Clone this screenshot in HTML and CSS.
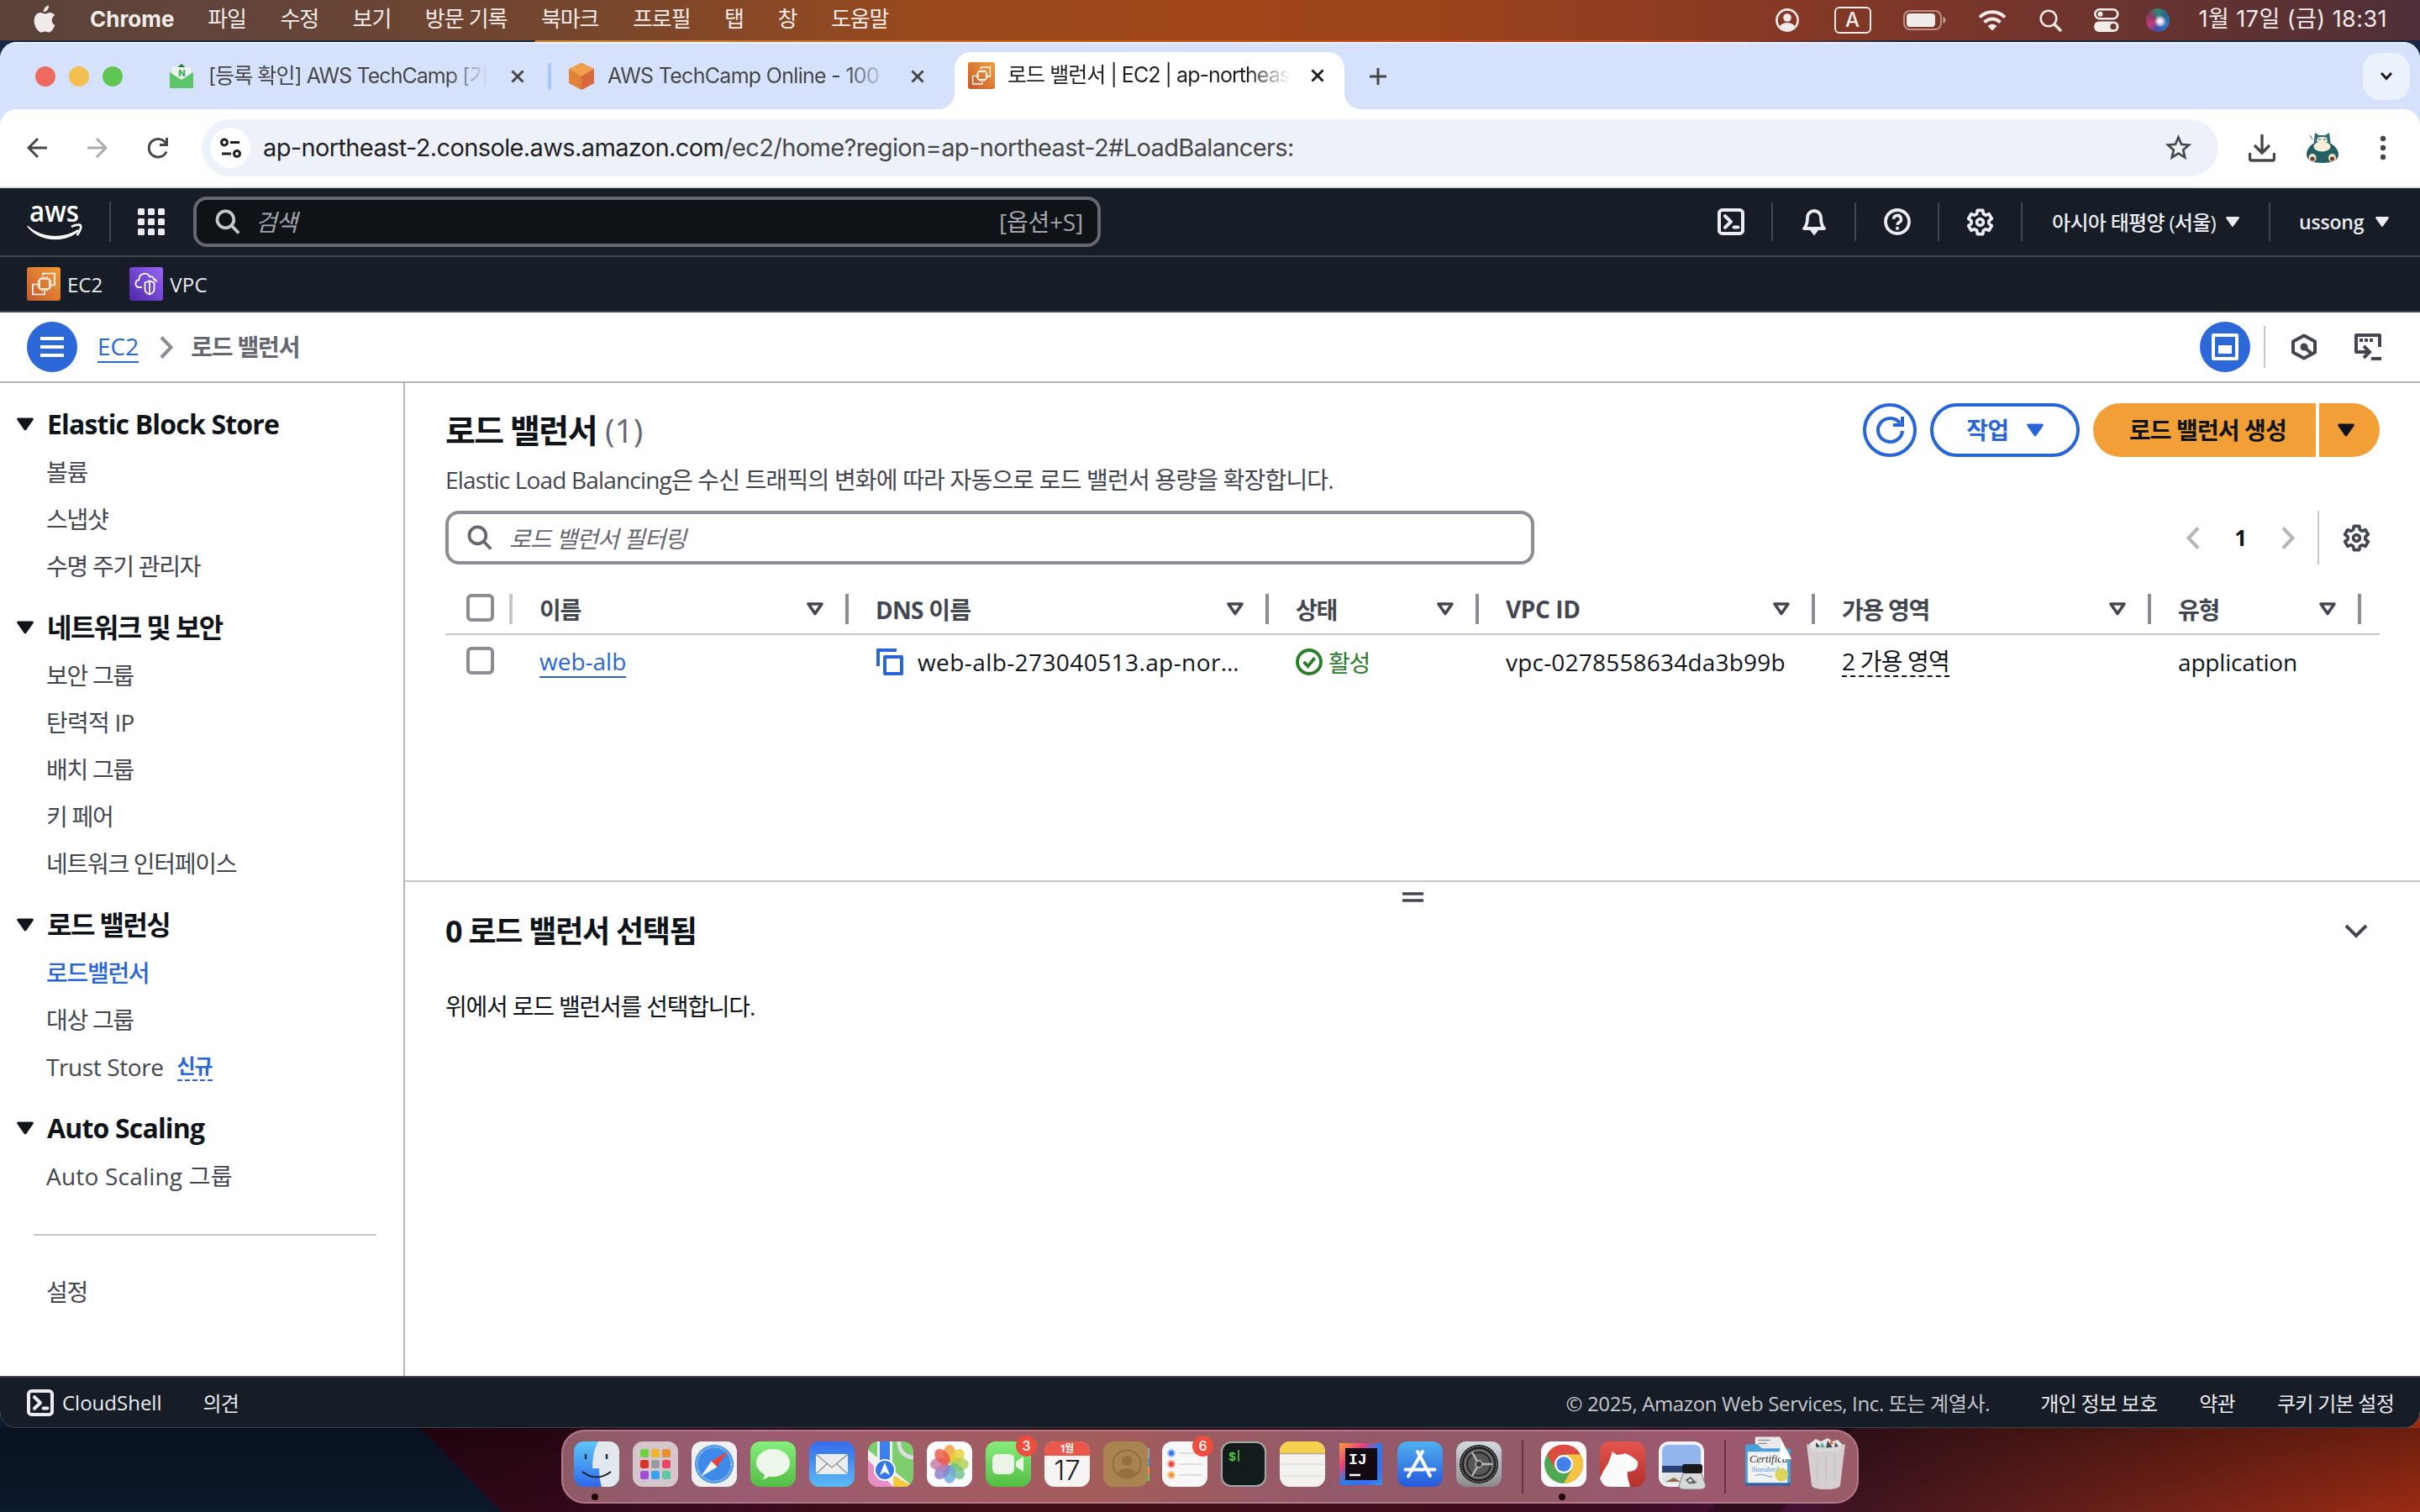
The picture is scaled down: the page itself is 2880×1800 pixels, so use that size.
FILE: index.html
```html
<!DOCTYPE html>
<html lang="ko">
<head>
<meta charset="utf-8">
<title>로드 밸런서 | EC2 | ap-northeast-2</title>
<link rel="stylesheet" href="styles.css">
</head>
<body>
<svg class="sprite" width="0" height="0">
  <defs>
    <linearGradient id="gOrange" x1="0" y1="1" x2="1" y2="0"><stop offset="0" stop-color="#c8592d"/><stop offset="1" stop-color="#f19d39"/></linearGradient>
    <linearGradient id="gPurple" x1="0" y1="1" x2="1" y2="0"><stop offset="0" stop-color="#4d27aa"/><stop offset="1" stop-color="#9a66f5"/></linearGradient>
    <symbol id="search" viewBox="0 0 16 16"><circle cx="6.6" cy="6.6" r="5.3" fill="none" stroke="currentColor" stroke-width="2"/><path d="M10.4 10.4l4.6 4.8" fill="none" stroke="currentColor" stroke-width="2"/></symbol>
    <symbol id="caret" viewBox="0 0 16 12"><path d="M1.4 0h13.2c1.1 0 1.7 1.200 1 2L9 11.300c-.5.800-1.500.800-2 0L.4 2C-.3 1.200.3 0 1.400 0z" fill="currentColor"/></symbol>
    <symbol id="filter" viewBox="0 0 20 16"><path d="M2 2h16l-8 11.500z" fill="none" stroke="currentColor" stroke-width="3.600" stroke-linejoin="round"/></symbol>
    <symbol id="gear" viewBox="0 0 16 16"><path d="M6.090 3.270L6.430 1.180H9.570L9.910 3.270L11.140 3.980L13.120 3.230L14.690 5.950L13.050 7.290V8.710L14.690 10.050L13.120 12.770L11.140 12.020L9.910 12.730L9.570 14.820H6.430L6.090 12.730L4.860 12.020L2.880 12.770L1.310 10.050L2.950 8.710V7.290L1.310 5.950L2.880 3.230L4.860 3.980z" fill="none" stroke="currentColor" stroke-width="1.800" stroke-linejoin="round"/><circle cx="8" cy="8" r="1.900" fill="none" stroke="currentColor" stroke-width="1.800"/></symbol>
    <symbol id="shell" viewBox="0 0 16 16"><rect x="1" y="1" width="14" height="14" rx="1.800" fill="none" stroke="currentColor" stroke-width="2"/><path d="M4.500 4.600L8 8l-3.500 3.400" fill="none" stroke="currentColor" stroke-width="2" stroke-linecap="round" stroke-linejoin="round"/><path d="M9.800 11.200h2.400" stroke="currentColor" stroke-width="2" stroke-linecap="round"/></symbol>
    <symbol id="ec2" viewBox="0 0 40 40"><rect width="40" height="40" rx="3" fill="url(#gOrange)"/><g fill="none" stroke="#fff" stroke-width="1.700"><path d="M19 10V7.500h14v14h-4M15 20.500H7v12h14V29"/><rect x="15" y="14" width="12" height="12" rx="1"/><path d="M18 14v-2.500M21 14v-2.500M24 14v-2.500M18 28.500V26M21 28.500V26M24 28.500V26M12.500 17H15M12.500 20H15M12.500 23H15M27 17h2.500M27 20h2.500M27 23h2.500"/></g></symbol>
    <symbol id="close" viewBox="0 0 16 16"><path d="M1.500 1.500l13 13M14.500 1.500l-13 13" stroke="currentColor" stroke-width="3" fill="none"/></symbol>
  </defs>
</svg>

<svg class="wallpaper" viewBox="0 0 2880 1800" width="2880" height="1800">
  <defs>
    <linearGradient id="wp1" x1="500" x2="2880" y1="0" y2="0" gradientUnits="userSpaceOnUse">
      <stop offset="0" stop-color="#2c0614"/><stop offset=".17" stop-color="#3d0a22"/><stop offset=".2" stop-color="#3b0d17"/><stop offset=".36" stop-color="#430f16"/><stop offset=".6" stop-color="#3d0b22"/><stop offset=".68" stop-color="#47103a"/><stop offset=".72" stop-color="#41151f"/><stop offset=".85" stop-color="#6a2018"/><stop offset="1" stop-color="#9a2b14"/>
    </linearGradient>
    <linearGradient id="wp2" x1="0" x2="0" y1="1700" y2="1800" gradientUnits="userSpaceOnUse"><stop offset="0" stop-color="#000" stop-opacity=".3"/><stop offset="1" stop-color="#000" stop-opacity="0"/></linearGradient>
    <linearGradient id="wp3" x1="635" x2="2250" y1="0" y2="0" gradientUnits="userSpaceOnUse"><stop offset="0" stop-color="#c98a33"/><stop offset=".35" stop-color="#c9601f"/><stop offset=".85" stop-color="#b8401a"/><stop offset="1" stop-color="#1a2a48"/></linearGradient>
  </defs>
  <rect width="2880" height="1800" fill="#152744"/>
  <path d="M631 60l8-16h1611v16z" fill="url(#wp3)"/>
  <rect y="1600" width="2880" height="200" fill="#0c182b"/>
  <path d="M423 1600L500 1700L597 1800H2880V1600z" fill="url(#wp1)"/>
  <path d="M2104 1700H2206L2119 1800H2034z" fill="#2e0d1d"/>
  <rect y="1700" width="2880" height="100" fill="url(#wp2)"/>
</svg>

<header class="menubar">
  <svg class="apple" viewBox="0 0 26 32"><path fill="#f1ecea" d="M18 0c.2 2.300-.7 4.200-1.900 5.600-1.200 1.400-2.700 2.200-4.300 2.100-.2-2 .7-4 1.900-5.300C14.900 1 16.600.2 18 0zM25.400 23.600c-1.500 4.100-4.200 8.300-7 8.400-1.800 0-2.500-1.100-4.700-1.100-2.200 0-2.900 1.100-4.700 1.100C5.700 32.100.6 25.300.6 18.300c0-6.100 3.700-9.800 7.600-9.800 2.200 0 3.900 1.500 5.500 1.500 1.500 0 3.500-1.600 6.200-1.500 1.300 0 3.700.6 5.200 3.200-4.900 2.900-4.200 9.600.3 11.900z"/></svg>
  <nav class="menus">
    <b class="t">Chrome</b><span class="t">파일</span><span class="t">수정</span><span class="t">보기</span><span class="t">방문 기록</span><span class="t">북마크</span><span class="t">프로필</span><span class="t">탭</span><span class="t">창</span><span class="t">도움말</span>
  </nav>
  <div class="tray">
    <svg width="28" height="28" viewBox="0 0 28 28"><circle cx="14" cy="14" r="12.600" fill="none" stroke="#f1ecea" stroke-width="2.600"/><circle cx="14" cy="11" r="4.800" fill="#f1ecea"/><path d="M5 21.500c3-6 15-6 18 0-4 5.500-14 5.500-18 0z" fill="#f1ecea"/></svg>
    <span class="ime">A</span>
    <svg width="52" height="24" viewBox="0 0 52 24"><rect x="1" y="1" width="44" height="22" rx="7" fill="none" stroke="#f1ecea" stroke-opacity=".5" stroke-width="2"/><rect x="4" y="4" width="34" height="16" rx="4" fill="#f1ecea"/><path d="M47.500 8c4 1.500 4 6.500 0 8z" fill="#f1ecea" fill-opacity=".6"/></svg>
    <svg width="34" height="26" viewBox="0 0 34 26"><path d="M2 9.500C10 1 24 1 32 9.500M7.500 15.500c5.500-5.500 13.500-5.500 19 0" fill="none" stroke="#f1ecea" stroke-width="4"/><path d="M11.500 20q5.500-4.500 11 0L17 25.500z" fill="#f1ecea"/></svg>
    <svg width="27" height="27" viewBox="0 0 27 27"><circle cx="11" cy="11" r="9.300" fill="none" stroke="#f1ecea" stroke-width="2.600"/><path d="M18 18l7 7" stroke="#f1ecea" stroke-width="3.400" stroke-linecap="round"/></svg>
    <svg width="30" height="28" viewBox="0 0 30 28"><rect x="1.300" y="1.300" width="27" height="11" rx="5.500" fill="none" stroke="#f1ecea" stroke-width="2.600"/><circle cx="7.500" cy="6.800" r="3" fill="#f1ecea"/><rect x="0" y="15.500" width="29.500" height="12.500" rx="6.200" fill="#f1ecea"/><circle cx="23" cy="21.700" r="3.600" fill="#6a3430"/></svg>
    <i class="siri"></i>
    <span class="t clock">1월 17일 (금) 18:31</span>
  </div>
</header>

<main class="window">
  <div class="tabstrip">
    <div class="lights"><i></i><i></i><i></i></div>
    <div class="tab tab-mail">
      <svg width="28" height="30" viewBox="0 0 28 30"><path d="M7 6l7-6 7 6z" fill="#2f7d43"/><path d="M0 10l14 8 14-8v18q0 1-1 1H1q-1 0-1-1z" fill="#5cc46a"/><path d="M3 4h22v8L14 19 3 12z" fill="#f1f3f1"/><text x="14" y="14.500" text-anchor="middle" font-family="Inter" font-weight="800" font-size="11" fill="#3dae53">N</text></svg>
      <span class="fade"><span class="t">[등록 확인] AWS TechCamp [기</span></span>
      <svg class="x" width="16" height="16"><use href="#close"/></svg>
    </div>
    <i class="tabsep"></i>
    <div class="tab tab-camp">
      <svg width="32" height="32" viewBox="0 0 32 32"><path d="M16 0l15 7v17l-15 8L1 24V7z" fill="#e2813a"/><path d="M16 0l15 7-15 9L1 7z" fill="#f0a04a"/><path d="M16 16l15-9v17l-15 8z" fill="#d9693a"/></svg>
      <span class="fade"><span class="t">AWS TechCamp Online - 100</span></span>
      <svg class="x" width="16" height="16"><use href="#close"/></svg>
    </div>
    <div class="tab tab-active">
      <svg width="32" height="32"><use href="#ec2"/></svg>
      <span class="fade"><span class="t">로드 밸런서 | EC2 | ap-northeas</span></span>
      <svg class="x" width="16" height="16"><use href="#close"/></svg>
    </div>
    <svg class="plus" width="22" height="22" viewBox="0 0 22 22"><path d="M11 1v20M1 11h20" stroke="#474747" stroke-width="3"/></svg>
    <div class="tabmenu"><svg width="16" height="12" viewBox="0 0 16 12"><path d="M2 2l6 6.500L14 2" fill="none" stroke="#1f1f1f" stroke-width="3"/></svg></div>
  </div>

  <div class="toolbar">
    <svg class="back" width="25" height="26" viewBox="0 0 25 26"><path d="M24 13H3M13 2L2 13l11 11" fill="none" stroke="#474747" stroke-width="3"/></svg>
    <svg class="fwd" width="25" height="26" viewBox="0 0 25 26"><path d="M1 13h21M12 2l11 11-11 11" fill="none" stroke="#ababab" stroke-width="3"/></svg>
    <svg class="reload" width="26" height="26" viewBox="0 0 26 26"><path d="M23 17.500A10.800 10.800 0 1 1 22.500 8" fill="none" stroke="#474747" stroke-width="3"/><path d="M25 1v10H15v-3h7V1z" fill="#474747"/></svg>
    <div class="omnibox">
      <i class="tune"><svg width="25" height="26" viewBox="0 0 25 26"><g fill="none" stroke="#1f1f1f" stroke-width="3"><circle cx="5" cy="6.500" r="3.500"/><path d="M12 6.500h11M2 20h11"/><circle cx="20" cy="20" r="3.500"/></g></svg></i>
      <span class="t url">ap-northeast-2.console.aws.amazon.com<em>/ec2/home?region=ap-northeast-2#LoadBalancers:</em></span>
      <svg width="31" height="30" viewBox="0 0 31 30"><path d="M15.500 3.500l3.500 8.300 9 .8-6.800 6 2 8.800-7.700-4.700-7.700 4.700 2-8.800-6.800-6 9-.8z" fill="none" stroke="#474747" stroke-width="2.700"/></svg>
    </div>
    <svg class="dl" width="32" height="33" viewBox="0 0 32 33"><path d="M16 0v21M7 13l9 9 9-9M1.500 22v7q0 2 2 2h25q2 0 2-2v-7" fill="none" stroke="#474747" stroke-width="3.400"/></svg>
    <svg class="avatar" width="40" height="36" viewBox="0 0 40 36"><path d="M11 0l5 3h7l5-3 1.500 12H9.500z" fill="#2a6c78"/><path d="M13 11h13c8 3 13 9 13 15 0 7-8 10-19.500 10S1 33 1 26c0-6 4-12 12-15z" fill="#245f66"/><path d="M14 6q6-2 11 0l1 5H13z" fill="#f5eed9"/><path d="M15 8h3M21 8h3" stroke="#2b4b52" stroke-width="1.200"/><ellipse cx="19.500" cy="16.500" rx="10" ry="6" fill="#f7f0d8"/><ellipse cx="8" cy="30" rx="4.500" ry="5" fill="#f3e6c8"/><ellipse cx="31.500" cy="30" rx="4.500" ry="5" fill="#f3e6c8"/><circle cx="8" cy="31" r="2.600" fill="#6d3d35"/><circle cx="31.500" cy="31" r="2.600" fill="#6d3d35"/><path d="M5 3l3 5" stroke="#777" stroke-width="1.200"/></svg>
    <svg class="dots" width="8" height="30" viewBox="0 0 8 30"><g fill="#474747"><circle cx="4" cy="4" r="3.200"/><circle cx="4" cy="15" r="3.200"/><circle cx="4" cy="26" r="3.200"/></g></svg>
  </div>

  <div class="awsbar">
    <svg class="logo" width="66" height="44" viewBox="0 0 66 44"><text x="3" y="22" textLength="59" lengthAdjust="spacingAndGlyphs" font-family="Open Sans" font-weight="600" font-size="34" fill="#fff">aws</text><path d="M1 27C17 42 43 43 60 32c1-.7 2 .5 1 1.300C44 48 14 45 1 28z" fill="#fff" stroke="#fff"/><path d="M53 28c4-2.500 10-3 11-1.500s-1 8-4.500 11.500" fill="none" stroke="#fff" stroke-width="2.600"/></svg>
    <i class="sep"></i>
    <svg class="apps" width="32" height="32" viewBox="0 0 32 32"><g fill="#ebebf0"><rect width="8" height="8" rx="1.500"/><rect x="12" width="8" height="8" rx="1.500"/><rect x="24" width="8" height="8" rx="1.500"/><rect y="12" width="8" height="8" rx="1.500"/><rect x="12" y="12" width="8" height="8" rx="1.500"/><rect x="24" y="12" width="8" height="8" rx="1.500"/><rect y="24" width="8" height="8" rx="1.500"/><rect x="12" y="24" width="8" height="8" rx="1.500"/><rect x="24" y="24" width="8" height="8" rx="1.500"/></g></svg>
    <div class="gsearch"><svg width="30" height="30"><use href="#search"/></svg><span class="t ph">검색</span><span class="t key">[옵션+S]</span></div>
    <div class="tools">
      <div><svg width="32" height="32"><use href="#shell"/></svg></div>
      <div><svg width="32" height="34" viewBox="0 0 16 17"><path d="M2 12.500c1.500-1.500 2-3 2-6.500a4 4 0 0 1 8 0c0 3.500.5 5 2 6.500z" fill="none" stroke="currentColor" stroke-width="1.900" stroke-linejoin="round"/><path d="M5.500 13.500h5L8 16.800z" fill="currentColor"/></svg></div>
      <div><svg width="32" height="32" viewBox="0 0 16 16"><circle cx="8" cy="8" r="7" fill="none" stroke="currentColor" stroke-width="1.900"/><path d="M5.800 6.400a2.200 2.200 0 1 1 3.300 1.900c-.8.500-1.100.8-1.100 1.600" fill="none" stroke="currentColor" stroke-width="1.800"/><rect x="7.100" y="11" width="1.800" height="1.800" fill="currentColor"/></svg></div>
      <div><svg width="33" height="33"><use href="#gear"/></svg></div>
      <div class="region"><span class="t">아시아 태평양 (서울)</span><svg width="16" height="12"><use href="#caret"/></svg></div>
      <div class="user"><span class="t">ussong</span><svg width="16" height="12"><use href="#caret"/></svg></div>
    </div>
  </div>

  <div class="favs">
    <svg width="40" height="40"><use href="#ec2"/></svg><span class="t f1">EC2</span>
    <svg width="40" height="40" viewBox="0 0 40 40"><rect width="40" height="40" rx="3" fill="url(#gPurple)"/><g fill="none" stroke="#fff" stroke-width="1.800"><path d="M15 24h-3c-6 0-6-8-.5-9C11 7 22 5 24 11.500c3-1 5 .5 5 3 2 .2 3 1 3.500 3"/><path d="M18.500 18.500l5.500-2 5.500 2v8q0 4-5.500 6-5.500-2-5.500-6zM24 17v15"/></g></svg><span class="t">VPC</span>
  </div>

  <div class="crumbs">
    <i class="round"><svg width="28" height="24" viewBox="0 0 28 24"><path d="M0 2h28M0 12h28M0 22h28" stroke="#fff" stroke-width="4"/></svg></i>
    <a class="t link">EC2</a>
    <svg class="chev" width="17" height="27" viewBox="0 0 17 27"><path d="M2 1.500L13.500 13.500 2 25.500" fill="none" stroke="#8c8c94" stroke-width="4"/></svg>
    <b class="t here">로드 밸런서</b>
    <div class="views">
      <i class="round"><svg width="32" height="32" viewBox="0 0 16 16"><rect x="1" y="1" width="14" height="14" fill="none" stroke="#fff" stroke-width="2" stroke-linejoin="round"/><rect x="4" y="7" width="8" height="5" fill="#fff"/></svg></i>
      <i class="vsep"></i>
      <svg width="32" height="32" viewBox="0 0 32 32"><path d="M16 2.500l13 7v13l-13 7-13-7v-13z" fill="none" stroke="#424650" stroke-width="4" stroke-linejoin="round"/><circle cx="16" cy="16" r="4.500" fill="#424650"/><path d="M17 17l8 7" stroke="#424650" stroke-width="4"/></svg>
      <svg width="32" height="32" viewBox="0 0 32 32"><path d="M30 16V2H2v20h14" fill="none" stroke="#424650" stroke-width="4" stroke-linejoin="round"/><path d="M6 8h4M12 8h4M18 8h4" stroke="#424650" stroke-width="4"/><path d="M11 15l7 7-7 7" fill="none" stroke="#424650" stroke-width="4"/><path d="M20 30h12" stroke="#424650" stroke-width="4"/></svg>
    </div>
  </div>

  <div class="body">
    <aside class="side">
      <h3 class="latin"><svg width="20" height="16"><use href="#caret"/></svg><span class="t">Elastic Block Store</span></h3>
      <ul><li><span class="t">볼륨</span></li><li><span class="t">스냅샷</span></li><li><span class="t">수명 주기 관리자</span></li></ul>
      <h3><svg width="20" height="16"><use href="#caret"/></svg><span class="t">네트워크 및 보안</span></h3>
      <ul><li><span class="t">보안 그룹</span></li><li><span class="t mixed">탄력적 IP</span></li><li><span class="t">배치 그룹</span></li><li><span class="t">키 페어</span></li><li><span class="t">네트워크 인터페이스</span></li></ul>
      <h3><svg width="20" height="16"><use href="#caret"/></svg><span class="t">로드 밸런싱</span></h3>
      <ul><li class="on"><span class="t">로드밸런서</span></li><li><span class="t">대상 그룹</span></li><li><span class="t tight">Trust Store</span><b class="t new">신규</b></li></ul>
      <h3 class="latin"><svg width="20" height="16"><use href="#caret"/></svg><span class="t">Auto Scaling</span></h3>
      <ul><li><span class="t wide">Auto Scaling 그룹</span></li></ul>
      <hr>
      <ul><li><span class="t">설정</span></li></ul>
    </aside>

    <section class="main">
      <div class="list">
        <div class="titlebar">
          <h1><span class="t">로드 밸런서</span><span class="t count">(1)</span></h1>
          <div class="btns">
            <button class="btn refresh"><svg width="33" height="32" viewBox="0 0 33 32"><path d="M31 17A14.500 14 0 1 1 28 7.500" fill="none" stroke="currentColor" stroke-width="4"/><path d="M31 0v10H20" fill="none" stroke="currentColor" stroke-width="4"/></svg></button>
            <button class="btn"><span class="t">작업</span><svg width="20" height="16"><use href="#caret"/></svg></button>
            <button class="btn primary first"><span class="t">로드 밸런서 생성</span></button><button class="btn primary last"><svg width="20" height="16"><use href="#caret"/></svg></button>
          </div>
        </div>
        <p class="desc"><span class="t">Elastic Load Balancing은 수신 트래픽의 변화에 따라 자동으로 로드 밸런서 용량을 확장합니다.</span></p>
        <div class="filterrow">
          <div class="filter"><svg width="30" height="30"><use href="#search"/></svg><span class="t">로드 밸런서 필터링</span></div>
          <div class="pager">
            <svg width="17" height="27" viewBox="0 0 17 27"><path d="M15 1.500L3.500 13.500 15 25.500" fill="none" stroke="#b4b4bb" stroke-width="4"/></svg>
            <b>1</b>
            <svg width="17" height="27" viewBox="0 0 17 27"><path d="M2 1.500L13.500 13.500 2 25.500" fill="none" stroke="#b4b4bb" stroke-width="4"/></svg>
            <i></i>
            <svg class="pref" width="33" height="33"><use href="#gear"/></svg>
          </div>
        </div>
        <div class="row head">
          <div class="ck"><i class="box"></i></div>
          <div><span class="t">이름</span><svg width="20" height="16"><use href="#filter"/></svg></div>
          <div><span class="t mixed">DNS 이름</span><svg width="20" height="16"><use href="#filter"/></svg></div>
          <div><span class="t">상태</span><svg width="20" height="16"><use href="#filter"/></svg></div>
          <div><span class="t tight">VPC ID</span><svg width="20" height="16"><use href="#filter"/></svg></div>
          <div><span class="t">가용 영역</span><svg width="20" height="16"><use href="#filter"/></svg></div>
          <div><span class="t">유형</span><svg width="20" height="16"><use href="#filter"/></svg></div>
        </div>
        <div class="row data">
          <div class="ck"><i class="box"></i></div>
          <div><a class="t link">web-alb</a></div>
          <div><svg class="copy" width="34" height="34" viewBox="0 0 34 34"><path d="M3 22V3h22" fill="none" stroke="#2866d8" stroke-width="4"/><rect x="11" y="11" width="20" height="20" fill="none" stroke="#2866d8" stroke-width="4" stroke-linejoin="round"/></svg><span class="t dns">web-alb-273040513.ap-nor…</span></div>
          <div class="ok"><svg width="32" height="32" viewBox="0 0 16 16"><circle cx="8" cy="8" r="7" fill="none" stroke="currentColor" stroke-width="1.900"/><path d="M4.800 8l2.500 2.600 4-5" fill="none" stroke="currentColor" stroke-width="1.900"/></svg><span class="t">활성</span></div>
          <div><span class="t wide">vpc-0278558634da3b99b</span></div>
          <div><span class="t dash">2 가용 영역</span></div>
          <div><span class="t app-type">application</span></div>
        </div>
      </div>
      <div class="panel">
        <svg class="grip" width="25" height="12" viewBox="0 0 25 12"><path d="M0 2h25M0 10h25" stroke="#424650" stroke-width="3.600"/></svg>
        <h2><span class="t">0 로드 밸런서 선택됨</span><svg width="28" height="18" viewBox="0 0 28 18"><path d="M2 2l12 12L26 2" fill="none" stroke="#424650" stroke-width="4"/></svg></h2>
        <p><span class="t">위에서 로드 밸런서를 선택합니다.</span></p>
      </div>
    </section>
  </div>

  <footer class="foot">
    <svg width="32" height="32"><use href="#shell"/></svg><span class="t cs">CloudShell</span><span class="t fb">의견</span>
    <span class="t copyr">© 2025, Amazon Web Services, Inc. 또는 계열사.</span><span class="t">개인 정보 보호</span><span class="t">약관</span><span class="t">쿠키 기본 설정</span>
  </footer>
</main>

<div class="dockarea">
  <div class="dock">
    <div class="app running"><svg viewBox="0 0 54 54"><defs><linearGradient id="fa" x2="0" y2="1"><stop stop-color="#5ec6f8"/><stop offset="1" stop-color="#2f69ea"/></linearGradient></defs><rect width="54" height="54" rx="12" fill="url(#fa)"/><path d="M29 0h13a12 12 0 0 1 12 12v30a12 12 0 0 1-12 12H33q-3-10-3-22h-8Q22 12 29 0z" fill="#e3e7ee"/><path d="M14 15v6M39 15v6" stroke="#1d3150" stroke-width="2.500"/><path d="M10 36q17 13 34 0" fill="none" stroke="#14202e" stroke-width="2"/></svg></div>
    <div class="app"><svg viewBox="0 0 54 54"><rect width="54" height="54" rx="12" fill="#d5c5cd"/><g><rect x="9" y="9" width="10" height="10" rx="2.500" fill="#6fd13f"/><rect x="22" y="9" width="10" height="10" rx="2.500" fill="#f0b52f"/><rect x="35" y="9" width="10" height="10" rx="2.500" fill="#e8902f"/><rect x="9" y="22" width="10" height="10" rx="2.500" fill="#d83328"/><rect x="22" y="22" width="10" height="10" rx="2.500" fill="#9b9ca3"/><rect x="35" y="22" width="10" height="10" rx="2.500" fill="#ea4763"/><rect x="9" y="35" width="10" height="10" rx="2.500" fill="#a24bdc"/><rect x="22" y="35" width="10" height="10" rx="2.500" fill="#34a4f0"/><rect x="35" y="35" width="10" height="10" rx="2.500" fill="#62c7a4"/></g></svg></div>
    <div class="app"><svg viewBox="0 0 54 54"><rect width="54" height="54" rx="12" fill="#f0f0f1"/><circle cx="27" cy="27" r="23" fill="#3d8ae8"/><circle cx="27" cy="27" r="20.500" fill="none" stroke="#d4e6fb" stroke-width="2.500" stroke-dasharray=".8 1.600"/><path d="M43 12L30.500 30.500 23.500 23.500z" fill="#e8433a"/><path d="M11 42l12.500-18.500 7 7z" fill="#f2f3f5"/></svg></div>
    <div class="app"><svg viewBox="0 0 54 54"><defs><linearGradient id="fb" x2="0" y2="1"><stop stop-color="#86ee7c"/><stop offset="1" stop-color="#53bd45"/></linearGradient></defs><rect width="54" height="54" rx="12" fill="url(#fb)"/><path d="M27 9c11 0 20 7 20 16.500S38 42 27 42c-2 0-3 0-5-.5-2 2-4 3-7.500 3.500 2-2 2.500-4 2-6C11 36 7 31 7 25.500 7 16 16 9 27 9z" fill="#ecf6e9"/></svg></div>
    <div class="app"><svg viewBox="0 0 54 54"><defs><linearGradient id="fc" x2="0" y2="1"><stop stop-color="#356bea"/><stop offset="1" stop-color="#5abcf5"/></linearGradient></defs><rect width="54" height="54" rx="12" fill="url(#fc)"/><rect x="8" y="15" width="38" height="24" rx="3" fill="#ededee"/><path d="M9 16l18 15 18-15M9 38l13-12M45 38L32 26" fill="none" stroke="#8e9197" stroke-width="1.300"/></svg></div>
    <div class="app"><svg viewBox="0 0 54 54"><defs><clipPath id="cm"><rect width="54" height="54" rx="12"/></clipPath></defs><g clip-path="url(#cm)"><rect width="54" height="54" fill="#7ccf6c"/><path d="M0 18l30 36H0z" fill="#e68fc6"/><path d="M0 10l54 44H30L0 22z" fill="#f0f0ee"/><path d="M30 54V40l24 14z" fill="#f4c93f"/><rect x="14" width="12" height="30" fill="#3a80ee"/><path d="M11 0h3v26h-3zM26 0h3v26h-3z" fill="#eef1f0"/><circle cx="54" cy="2" r="17" fill="none" stroke="#d9dde0" stroke-width="5"/></g><circle cx="20" cy="34" r="13" fill="#fff"/><circle cx="20" cy="34" r="11" fill="#3577ea"/><path d="M20 25l6 15-6-3.500-6 3.500z" fill="#fff"/></svg></div>
    <div class="app"><svg viewBox="0 0 54 54"><rect width="54" height="54" rx="12" fill="#fbfbfb"/><g fill-opacity=".82"><ellipse cx="27" cy="15" rx="7.500" ry="11" fill="#f29b37"/><ellipse cx="27" cy="15" rx="7.500" ry="11" fill="#e9cf3a" transform="rotate(45 27 27)"/><ellipse cx="27" cy="15" rx="7.500" ry="11" fill="#b3cf50" transform="rotate(90 27 27)"/><ellipse cx="27" cy="15" rx="7.500" ry="11" fill="#6fbf84" transform="rotate(135 27 27)"/><ellipse cx="27" cy="15" rx="7.500" ry="11" fill="#6aa8dd" transform="rotate(180 27 27)"/><ellipse cx="27" cy="15" rx="7.500" ry="11" fill="#8a7fc9" transform="rotate(225 27 27)"/><ellipse cx="27" cy="15" rx="7.500" ry="11" fill="#c67aa9" transform="rotate(270 27 27)"/><ellipse cx="27" cy="15" rx="7.500" ry="11" fill="#ea5a48" transform="rotate(315 27 27)"/></g></svg></div>
    <div class="app"><svg viewBox="0 0 54 54"><rect width="54" height="54" rx="12" fill="url(#fb)"/><rect x="8" y="15" width="26" height="24" rx="6" fill="#eaf5e7"/><path d="M36 24l9-6v18l-9-6z" fill="#eaf5e7"/></svg><b class="badge">3</b></div>
    <div class="app"><svg viewBox="0 0 54 54"><defs><clipPath id="cc"><rect width="54" height="54" rx="12"/></clipPath></defs><rect width="54" height="54" rx="12" fill="#f7f5f3"/><rect width="54" height="17" fill="#e8594c" clip-path="url(#cc)"/></svg><span class="mon">1월</span><span class="day">17</span></div>
    <div class="app"><svg viewBox="0 0 54 54"><path d="M50 8h5v12h-5z" fill="#8fa6b0"/><path d="M50 20h5v10h-5z" fill="#4b92d8"/><path d="M50 30h5v9h-5z" fill="#ee9338"/><path d="M50 39h5v8h-5z" fill="#6abf4e"/><rect width="53" height="54" rx="12" fill="#a98350"/><circle cx="28" cy="27" r="16.500" fill="none" stroke="#8b6939" stroke-width="1.500"/><circle cx="28" cy="23" r="6" fill="#92703f"/><path d="M17 38c3-8 19-8 22 0-6 6-16 6-22 0z" fill="#92703f"/></svg></div>
    <div class="app"><svg viewBox="0 0 54 54"><rect width="54" height="54" rx="12" fill="#f8f7f7"/><g stroke="#c5c3c3" stroke-width="1.200"><path d="M20 14h28M20 27h28M20 40h28"/></g><g stroke-width="2" fill="none"><circle cx="11" cy="14" r="4" fill="#3478f6" stroke="#a9c5f6"/><circle cx="11" cy="27" r="4" fill="#e84b3d" stroke="#f3b2ac"/><circle cx="11" cy="40" r="4" fill="#f29a37" stroke="#f7d2a5"/></g></svg><b class="badge">6</b></div>
    <div class="app"><svg viewBox="0 0 54 54"><rect x="1" y="1" width="52" height="52" rx="11" fill="#141b1d" stroke="#a3a8aa" stroke-width="2"/><text x="9" y="23" font-family="Liberation Mono" font-weight="700" font-size="15" fill="#57d13c">$</text><path d="M21 10v14" stroke="#57d13c" stroke-width="1.500"/></svg></div>
    <div class="app"><svg viewBox="0 0 54 54"><rect width="54" height="54" rx="12" fill="#f3f2ef"/><path d="M0 15v-3A12 12 0 0 1 12 0h30a12 12 0 0 1 12 12v3z" fill="#f7d04d"/><path d="M0 14.500h54" stroke="#b4a98a" stroke-width="1.500"/><path d="M0 27h54M0 41h54" stroke="#d6d5d1" stroke-width="1.200"/></svg></div>
    <div class="app"><svg viewBox="0 0 54 54"><defs><linearGradient id="fj" x1="0" y1="0" x2="1" y2="1"><stop stop-color="#f6a13c"/><stop offset=".3" stop-color="#e8407c"/><stop offset=".5" stop-color="#2a7de6"/><stop offset=".8" stop-color="#3c6cf0"/><stop offset="1" stop-color="#2a9ae8"/></linearGradient></defs><rect x="1" y="2" width="51" height="50" fill="url(#fj)"/><rect x="8" y="8" width="38" height="38" fill="#140a14"/><text x="12" y="27" font-family="Liberation Mono" font-weight="700" font-size="18" fill="#fff">IJ</text><path d="M13 40h13" stroke="#fff" stroke-width="2.500"/></svg></div>
    <div class="app"><svg viewBox="0 0 54 54"><defs><linearGradient id="fs" x2="0" y2="1"><stop stop-color="#4fb0f0"/><stop offset="1" stop-color="#2559da"/></linearGradient></defs><rect width="54" height="54" rx="12" fill="url(#fs)"/><path d="M24 12l15 29M30 12L16 36M9.500 33.500h22M37 33.500h7.500M14.500 39l-1.500 2.500" stroke="#fff" stroke-width="4" stroke-linecap="round"/></svg></div>
    <div class="app"><svg viewBox="0 0 54 54"><defs><linearGradient id="fg" x2="0" y2="1"><stop stop-color="#d3dbe2"/><stop offset="1" stop-color="#8b8b8d"/></linearGradient></defs><rect width="54" height="54" rx="12" fill="url(#fg)"/><circle cx="27" cy="27" r="20.500" fill="#6c6c6e" stroke="#1e1e1f" stroke-width="5"/><circle cx="27" cy="27" r="21" fill="none" stroke="#8c8c8e" stroke-width="1.500" stroke-dasharray="1.500 1.500"/><circle cx="27" cy="27" r="14" fill="#57575a" stroke="#262628" stroke-width="2"/><path d="M27 27h16M27 27l-8 14M27 27l-8-14" stroke="#b9b9bb" stroke-width="2.500"/><circle cx="27" cy="27" r="4" fill="#3a3a3c" stroke="#b9b9bb" stroke-width="1.500"/></svg></div>
    <i class="dsep"></i>
    <div class="app running"><svg viewBox="0 0 54 54"><rect width="54" height="54" rx="12" fill="#fafafa"/><circle cx="27" cy="27" r="23" fill="#52a752"/><path d="M7 15.500A23 23 0 0 1 47 15.500H27z" fill="#dc4b3e"/><path d="M7 15.500L17.500 33 27 15.500z" fill="#dc4b3e"/><path d="M47 15.500A23 23 0 0 1 27 50L37 32.500 30 15.500z" fill="#f5c243"/><circle cx="27" cy="27" r="11" fill="#fff"/><circle cx="27" cy="27" r="8.800" fill="#4281e8"/></svg></div>
    <div class="app"><svg viewBox="0 0 54 54"><defs><linearGradient id="fk" x2="0" y2="1"><stop stop-color="#e5554e"/><stop offset="1" stop-color="#b42f2b"/></linearGradient></defs><rect width="54" height="54" rx="12" fill="url(#fk)"/><path d="M15 12l5 4 8-1 2-1q10 4 15 10c1 8-3 12-12 12-1 7 2 12 3 18H12Q3 54 0 44q4-10 10-18z" fill="#fafafa"/></svg></div>
    <div class="app"><svg viewBox="0 0 54 54"><rect width="54" height="54" rx="12" fill="#f2f2f3"/><rect x="4" y="4" width="46" height="46" rx="7" fill="#92b5ee"/><rect x="4" y="29" width="46" height="8" fill="#2c4273"/><path d="M4 37h46v6a7 7 0 0 1-7 7H11a7 7 0 0 1-7-7z" fill="#dfe4e4"/><path d="M8 48l10-5 8 5z" fill="#8f6a4b"/><path d="M30 35h20l6 18q-1 4-6 4H29q-4 0-5-4z" fill="#d5d9da" stroke="#7e8284"/><rect x="28" y="27" width="24" height="11" rx="3" fill="#1a1a1b"/><path d="M33 46l5-3 4 4-5 3zM40 50l5-2" stroke="#555" fill="none" stroke-width="1.500"/></svg></div>
    <i class="dsep"></i>
    <div class="app cert"><svg viewBox="0 0 58 60"><path d="M14 0h30v20H14z" fill="#e9e9ea"/><path d="M18 4h14M18 8h10" stroke="#777"/><path d="M2 12q0-3 3-3h12l5 5h33q2 0 2 3v41H2z" fill="#4a9fd6"/><path d="M5 18h48v38H5z" fill="#f0f1f1"/><text x="7" y="31" font-family="Liberation Serif" font-style="italic" font-size="13" fill="#333">Certifica</text><path d="M44 0l14 27H44z" fill="#fff"/><text x="10" y="42" font-family="Liberation Serif" font-style="italic" font-size="9" fill="#5b9bd5">Standard</text><path d="M14 47q7-3 14 0t6 0" fill="none" stroke="#5b9bd5"/><circle cx="46" cy="46" r="8" fill="#dcd55c"/><path d="M2 56h55v3H2z" fill="#2a62a9"/></svg></div>
    <div class="app trash"><svg viewBox="0 0 48 62"><path d="M4 8l8-6 6 3 8-4 6 4 6-2 6 6-4 8H8z" fill="#e6e6e6"/><path d="M12 6l5 5-5 3zM26 4l6 8-8 1zM35 6l5 6-6 1z" fill="#3f4750"/><path d="M19 6l4 6-6 1z" fill="#4cb6a0"/><path d="M30 3l3 5-5 1z" fill="#d86a3a"/><path d="M1 8q23 9 46 0l-6 49q-1 5-17 5T7 57z" fill="#d9d6d7" fill-opacity=".95"/><path d="M14 18l-1 36M24 20v36M34 18l1 36" stroke="#cbc8ca" stroke-width="2"/></svg></div>
  </div>
</div>
</body>
</html>
```
FILE: styles.css
```css
*{box-sizing:border-box;margin:0;padding:0}
body{width:2880px;height:1800px;overflow:hidden;display:flex;flex-direction:column;position:relative;font-family:"Open Sans","Noto Sans CJK KR",sans-serif;font-size:28px;color:#0f141a}
.sprite{position:absolute}
.wallpaper{position:absolute;left:0;top:0;z-index:-1}
svg{display:block;flex:none}
i{font-style:normal;display:block;flex:none}
.t{white-space:nowrap;flex:none}
a{color:#2866d8}

/* macOS menu bar */
.menubar{height:48px;flex:none;display:flex;align-items:center;padding:0 39px 0 40px;color:#f1ecea;font:26px/46px Inter,"Noto Sans CJK KR",sans-serif;background:linear-gradient(90deg,#5a4238 0,#63443a 10%,#75462d 24%,#98491d 38%,#a14618 50%,#9b421b 60%,#8e3c22 69%,#7b3529 80%,#653330 90%,#4e2f38 100%)}
.apple{width:26px;height:33px;margin-top:-4px}
.menus{display:flex;margin-left:41px;gap:40.6px;letter-spacing:-1.1px;height:48px}
.menus b{font-weight:700;letter-spacing:0;margin-right:-1px}
.tray{margin-left:auto;display:flex;align-items:center}
.ime{width:44px;height:32px;margin:0 38px 0 42px;border:2px solid #f1ecea;border-radius:6px;font-size:24px;line-height:28px;text-align:center;font-weight:500}
.tray svg:nth-of-type(2){margin-right:37px}
.tray svg:nth-of-type(3){margin-right:39px}
.tray svg:nth-of-type(4){margin-right:38px}
.tray svg:nth-of-type(5){margin-right:32px}
.siri{width:28px;height:28px;border-radius:50%;margin-right:35px;background:radial-gradient(circle at 60% 55%,#fff 0,#e8e4f8 12%,transparent 32%),conic-gradient(#2c8a74,#2f5f8e,#2d7dd0,#3b4fa8,#c23a80,#8a3a5a,#2c8a74)}
.clock{font-size:27px;letter-spacing:.44px;padding-bottom:2px}

/* browser window */
.window{height:1650px;flex:none;margin-top:2px;border-radius:20px;overflow:hidden;background:#fff;display:flex;flex-direction:column}
.tabstrip{height:80px;flex:none;background:#d6e1fb;display:flex;align-items:center;font:25px/36px Inter,"Noto Sans CJK KR",sans-serif;letter-spacing:-.95px;color:#474747;border-top:2px solid #eaf0fd}
.lights{display:flex;gap:16px;margin-left:42px;width:160px}
.lights i{width:24px;height:24px;border-radius:50%;background:#ec6a5e}
.lights i:nth-child(2){background:#f4bf4f}
.lights i:nth-child(3){background:#61c554}
.tab{display:flex;align-items:center;height:68px;margin-bottom:1px}
.fade{overflow:hidden;padding-bottom:2px;-webkit-mask-image:linear-gradient(90deg,#000 85%,transparent)}
.tab .x{margin-left:auto}
.tab-mail{width:422px}
.tab-mail .fade{margin-left:18px;width:334px}
.tabsep{width:4px;height:32px;border-radius:2px;background:#a8c7fa;margin:0 20px 0 28px}
.tab-camp{width:424px;letter-spacing:-.7px}
.tab-camp .fade{margin-left:15px;width:334px}
.tab-active{margin:10px 0 0 36px;width:464px;padding:0 24px 12px 16px;position:relative;background:#fff;border-radius:20px 20px 0 0;color:#1f1f1f}
.tab-active .fade{margin-left:15px;width:336px}
.tab-active::before,.tab-active::after{content:"";position:absolute;bottom:0;width:20px;height:20px;background:radial-gradient(circle at 0 0,transparent 20px,#fff 20.5px)}
.tab-active::before{left:-20px}
.tab-active::after{right:-20px;transform:scaleX(-1)}
.plus{margin-left:29px}
.tabmenu{width:56px;height:56px;border-radius:20px;background:#ebf2fc;display:flex;align-items:center;justify-content:center;margin:0 12px 0 auto}

.toolbar{height:94px;flex:none;background:#fff;border-bottom:2px solid #dedede;display:flex;align-items:center;box-shadow:0 -20px 0 #d6e1fb;border-radius:20px 20px 0 0}
.tabstrip{position:relative;z-index:1;margin-bottom:-20px;height:100px;padding-bottom:20px}
.toolbar{position:relative;z-index:2;box-shadow:none}
.back{margin-left:32px}
.fwd{margin-left:46px}
.reload{margin-left:47px}
.omnibox{margin-left:39px;width:2400px;height:68px;border-radius:34px;background:#edf1fa;display:flex;align-items:center;padding:0 32px 0 10px}
.tune{width:48px;height:48px;border-radius:50%;background:#fff;display:flex;align-items:center;justify-content:center}
.url{font:29px/40px Inter,sans-serif;letter-spacing:-.63px;color:#1f1f1f;margin-left:15px}
.url em{font-style:normal;color:#474747}
.omnibox>svg{margin-left:auto;margin-top:-2px}
.dl{margin-left:36px}
.avatar{margin-left:36px}
.dots{margin-left:48px}

/* console header */
.awsbar{height:82px;flex:none;background:#161d26;border-bottom:2px solid #424650;display:flex;align-items:center;color:#ebebf0;font-size:24px}
.logo{margin-left:32px;overflow:visible}
.sep{width:2px;height:48px;background:#424650;margin:0 32px}
.gsearch{margin-left:34px;width:1080px;height:60px;border:4px solid #656871;border-radius:16px;background:#0f1216;display:flex;align-items:center;padding:0 17px 0 22px;color:#c6c6cd}
.gsearch .t{padding-bottom:2px;font-size:28px;color:#a4a4ad}
.ph{margin-left:18px;font-style:italic;letter-spacing:-1.27px}
.key{margin-left:auto;letter-spacing:-.2px}
.tools{display:flex;align-items:center;margin-left:auto}
.tools div{width:99px;height:46px;display:flex;align-items:center;justify-content:center;border-right:2px solid #424650}
.tools .region{width:295px;gap:12px;font-weight:500;letter-spacing:-.69px}
.region .t{padding-bottom:2px}
.tools .user{width:178px;gap:14px;border:0;justify-content:flex-start;padding-left:34px;font-weight:600;font-size:23px;letter-spacing:-.2px}

.favs{height:66px;flex:none;background:#161d26;border-bottom:2px solid #424650;display:flex;align-items:center;padding-left:32px;color:#ebebf0;font-size:24px}
.favs .t{margin-left:8px;letter-spacing:.3px}
.favs .f1{margin-right:32px;letter-spacing:0}

.crumbs{height:84px;flex:none;border-bottom:2px solid #b4b4bb;display:flex;align-items:center;padding-left:32px}
.round{width:60px;height:60px;border-radius:50%;background:#2d68d9;display:flex;align-items:center;justify-content:center}
.link{border-bottom:2px solid #2866d8;line-height:36px}
.crumbs .link{margin-left:24px}
.chev{margin-left:25px}
.here{margin-left:20px;color:#656871;letter-spacing:-1.18px;padding-bottom:2px}
.views{margin-left:auto;margin-right:46px;display:flex;align-items:center}
.vsep{width:2px;height:50px;background:#c6c6cd;margin:0 30px 0 16px}
.views svg+svg{margin-left:44px}

/* side navigation */
.body{flex:1;display:flex;min-height:0}
.mixed{letter-spacing:-.75px}
.tight{letter-spacing:-.4px}
.wide{letter-spacing:.2px}
.side{width:482px;flex:none;border-right:2px solid #b4b4bb;padding-top:23px;color:#424650}
.side h3{height:52px;display:flex;align-items:center;padding-left:20px;color:#0f141a;font-size:32px;line-height:52px;letter-spacing:-1.55px}
.side h3.latin{letter-spacing:-.83px}
.side h3 .t{margin-left:16px}
.side ul{list-style:none;margin:3px 0 19px 55px}
.side li{height:56px;line-height:56px;display:flex;align-items:center}
.side li .t:not([class*=" "]){letter-spacing:-1.3px}
.side .on{color:#2866d8;font-weight:500}
.new{margin-left:16px;color:#2866d8;font-size:24px;line-height:32px;letter-spacing:-1.09px;border-bottom:2px dashed #2866d8}
.side hr{border:0;height:2px;background:#c6c6cd;margin:41px 32px 39px 40px}

/* load balancer list */
.main{flex:1;display:flex;flex-direction:column;min-width:0}
.list{height:592px;flex:none;padding:24px 48px 0}
.titlebar{display:flex;justify-content:space-between;align-items:center;height:64px}
h1{font-size:39px;display:flex;gap:10px;line-height:60px;letter-spacing:-1.6px}
.count{font-weight:400;color:#656871;letter-spacing:0}
.btns{display:flex}
.btn{height:64px;border:4px solid #2866d8;border-radius:32px;background:#fff;color:#2866d8;font:700 28px/56px "Open Sans","Noto Sans CJK KR",sans-serif;letter-spacing:-.9px;display:flex;align-items:center;padding:0 39px;gap:22px;margin-right:16px}
.refresh{width:64px;padding:0;justify-content:center}
.primary{border:0;background:#f29f38;color:#0f141a}
.first{border-radius:32px 0 0 32px;width:265px;padding:0 0 0 43px;margin-right:4px}
.last{border-radius:0 32px 32px 0;width:72px;padding:0 0 0 22px;margin:0}
.desc{height:64px;line-height:54px;color:#424650;letter-spacing:-.82px}
.filterrow{display:flex;justify-content:space-between;height:64px}
.filter{width:1296px;border:4px solid #8c8c94;border-radius:16px;display:flex;align-items:center;padding-left:22px;gap:20px;color:#656871;font-style:italic;letter-spacing:-1.06px}
.pager{display:flex;align-items:center;margin-right:11px}
.pager b{margin:0 41px;font-size:26px}
.pager i{width:2px;height:64px;background:#c6c6cd;margin:0 28px 0 26px}
.pref{color:#424650}
.row{display:grid;grid-template-columns:80px 400px 500px 250px 400px 400px 250px 1fr;align-items:center}
.head{height:84px;border-bottom:2px solid #c6c6cd;color:#424650;font-weight:700;align-items:start;padding-top:35px}
.row>div{display:flex;align-items:center;height:36px;padding:0 30px 0 32px}
.head>div{border-right:4px solid #8c8c94;padding:0 26px 0 32px;justify-content:space-between}
.row .t:not([class*=" "]){letter-spacing:-1.27px}
.head .t{padding-bottom:1px}
.row>.ck{padding:0 0 3px 25px}
.head>.ck{border-color:#c6c6cd}
.box{width:33px;height:33px;border:4px solid #8c8c94;border-radius:6px}
.data{height:64px}
.copy{margin:0 16px 0 0}
.dns{letter-spacing:.41px}
.app-type{letter-spacing:-.18px}
.row>.ok{color:#2b7d2b;gap:7px}
.dash{border-bottom:2px dashed #0f141a;line-height:34px;letter-spacing:-.8px}

/* split panel */
.panel{flex:1;border-top:2px solid #c6c6cd;padding:12px 48px 0;display:flex;flex-direction:column}
.grip{align-self:center}
.panel h2{display:flex;align-items:center;justify-content:space-between;font-size:36px;line-height:44px;letter-spacing:-1.25px;margin-top:13px;padding-right:14px}
.panel p{margin-top:47px;line-height:40px;letter-spacing:-1.21px}

.foot{height:62px;flex:none;background:#161d26;border-top:2px solid #424650;box-shadow:inset 0 -1px 0 #3a4048;display:flex;align-items:center;padding:0 31px 0 32px;font-size:24px;color:#ebebf0;letter-spacing:-.74px}
.foot .t{padding-bottom:2px}
.foot .cs{margin-left:10px;font-weight:500;letter-spacing:0}
.foot .fb{margin-left:49px}
.foot .copyr{margin-left:auto;color:#c6c6cd;letter-spacing:-.35px}
.foot .copyr~.t{margin-left:50px}
.foot .copyr+.t{margin-left:60px}

/* dock */
.dockarea{height:100px;flex:none;padding-top:2px;display:flex;justify-content:center}
.dock{width:1544px;height:88px;border:2px solid #b57a8a;border-radius:28px;background:linear-gradient(90deg,#8e5a66 0,#9a5c72 14%,#a25c62 33%,#a35d5a 41%,#93596a 60%,#935a68 75%,#9c5870 88%,#995c66 100%);display:flex;align-items:flex-start;padding:12px 0 0 13px}
.app{width:54px;height:54px;margin-right:16px;position:relative;flex:none}
.app>svg{width:54px;height:54px;overflow:visible}
.running::after{content:"";position:absolute;left:21px;top:62px;width:8px;height:8px;border-radius:50%;background:#1d0508}
.badge{position:absolute;right:-7px;top:-7px;width:25px;height:25px;border-radius:50%;background:#ec4d3d;color:#fff;font:500 16px/25px Inter,sans-serif;text-align:center}
.mon{position:absolute;left:0;top:0;width:54px;text-align:center;font:700 12px/17px Inter,"Noto Sans CJK KR",sans-serif;color:#fff}
.day{position:absolute;left:0;top:17px;width:54px;text-align:center;font:300 33px/34px Inter,sans-serif;color:#222}
.dsep{width:2px;height:64px;margin:-2px 21px 0 8px;background:#6b3142}
.cert{width:58px;margin-top:-6px}
.cert>svg{width:57px;height:60px}
.trash{margin:-5px 0 0}
.trash>svg{width:48px;height:62px}
```
